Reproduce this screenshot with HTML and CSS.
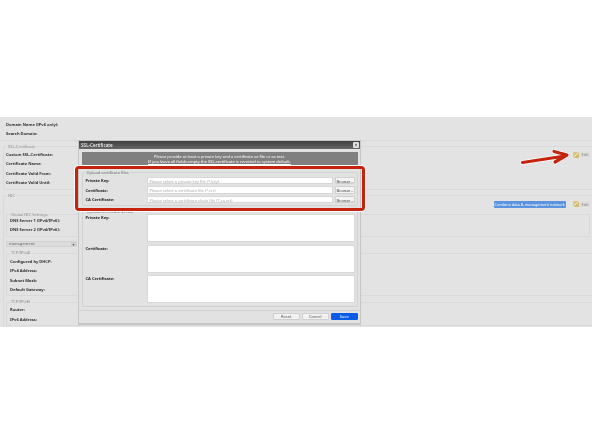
FILE: index.html
```html
<!DOCTYPE html>
<html lang="en">
<head>
<meta charset="utf-8">
<title>SSL-Certificate</title>
<link rel="stylesheet" href="styles.css">
</head>
<body>
<main class="panel">
  <div class="row">Domain Name (IPv6 only):</div>
  <div class="row">Search Domain:</div>
  <hr class="divider">
  <section class="group ssl">
    <span class="legend">SSL-Certificate</span>
    <div class="row">Custom SSL-Certificate:</div>
    <div class="row">Certificate Name:</div>
    <div class="row">Certificate Valid From:</div>
    <div class="row">Certificate Valid Until:</div>
    <div class="edit edit-ssl"><span class="pencil"></span><span>Edit</span></div>
  </section>
  <section class="group nic">
    <span class="legend">NIC</span>
    <div class="nic-actions">
      <span class="combine">Combine data &amp; management network</span>
      <div class="edit"><span class="pencil"></span><span>Edit</span></div>
    </div>
    <section class="group inner global">
      <span class="legend">Global NIC Settings</span>
      <div class="row">DNS Server 1 (IPv4/IPv6):</div>
      <div class="row">DNS Server 2 (IPv4/IPv6):</div>
    </section>
    <div class="select"><span>management</span><span class="caret">&#9662;</span></div>
    <section class="group inner v4">
      <span class="legend">TCP/IP(v4)</span>
      <div class="row">Configured by DHCP:</div>
      <div class="row">IPv4 Address:</div>
      <div class="row">Subnet Mask:</div>
      <div class="row">Default Gateway:</div>
    </section>
    <section class="group inner v6">
      <span class="legend">TCP/IP(v6)</span>
      <div class="row">Router:</div>
      <div class="row">IPv6 Address:</div>
    </section>
  </section>
</main>

<div class="modal">
  <header class="title"><span>SSL-Certificate</span><span class="close">&#215;</span></header>
  <div class="message">
    <p>Please provide at least a private key and a certificate as file or as text.</p>
    <p><u>If you leave all fields empty the SSL-certificate is reverted to system default.</u></p>
  </div>
  <section class="mgroup files">
    <span class="legend">Upload certificate files</span>
    <div class="frow"><b>Private Key:</b><span class="input">Please select a private key file (*.key)</span><span class="browse">Browse...</span></div>
    <div class="frow"><b>Certificate:</b><span class="input">Please select a certificate file (*.crt)</span><span class="browse">Browse...</span></div>
    <div class="frow"><b>CA Certificate:</b><span class="input">Please select a certificate chain file (*-ca.crt)</span><span class="browse">Browse...</span></div>
  </section>
  <section class="mgroup texts">
    <span class="legend">Upload certificate as text</span>
    <div class="trow"><b>Private Key:</b><span class="area"></span></div>
    <div class="trow"><b>Certificate:</b><span class="area"></span></div>
    <div class="trow"><b>CA Certificate:</b><span class="area"></span></div>
  </section>
  <footer class="actions">
    <span class="btn">Reset</span><span class="btn">Cancel</span><span class="btn save">Save</span>
  </footer>
</div>

<div class="highlight"></div>
<svg class="arrow" width="60" height="24" viewBox="0 0 60 24" aria-hidden="true">
  <g fill="none" stroke-linecap="round" stroke-linejoin="round">
    <path d="M3.5 15.5 L46 9 M35 4.5 L48 8 L36 15" stroke="#fff" stroke-width="4.6"/>
    <path d="M3.5 15.5 L46 9 M35 4.5 L48 8 L36 15" stroke="#c4230d" stroke-width="3.2"/>
  </g>
</svg>
</body>
</html>
```

FILE: styles.css
```css
* { box-sizing: border-box; }
html, body { margin: 0; padding: 0; }
body {
  width: 592px;
  height: 444px;
  background: #fff;
  overflow: hidden;
  position: relative;
  font-family: "Noto Sans", "DejaVu Sans", sans-serif;
  font-size: 4.05px;
  color: #333;
  padding-top: 117px;
}
b, .row { font-size: 4.05px; font-weight: bold; }
.panel {
  height: 209.5px;
  background: #e3e3e3;
  padding: 2.5px 0 0 6px;
  overflow: hidden;
  filter: blur(0.3px);
}
.row {
  height: 9.5px;
  line-height: 9.5px;
  white-space: nowrap;
}
.divider {
  height: 1px;
  margin: 1px 0 0 -6px;
  border: 0;
  background: #d9d9d9;
}
.group {
  position: relative;
  border: 1px solid #d9d9d9;
  border-right: 0;
  border-radius: 2px 0 0 2px;
}
.legend {
  position: absolute;
  top: -3.5px;
  left: 2.5px;
  padding: 0 1.5px;
  background: #e3e3e3;
  line-height: 6px;
  color: #8c8c8c;
  font-weight: normal;
  white-space: nowrap;
}
.ssl {
  margin: 5.5px 0 0 -3px;
  height: 44px;
  padding: 2.75px 0 0 2px;
}
.nic {
  margin: 5px 0 0 -3px;
  height: 132px;
  padding: 18px 0 0 2px;
  border-bottom: 0;
}
.inner {
  margin-right: 0;
  padding-left: 3px;
  border-radius: 2px 0 0 2px;
}
.global {
  height: 22.5px;
  margin-right: 2px;
  padding-top: 0.55px;
  border-right: 1px solid #d9d9d9;
}
.select {
  display: flex;
  justify-content: space-between;
  align-items: center;
  width: 71px;
  height: 6px;
  margin-top: 4.2px;
  padding-left: 2px;
  background: #dcdcdc;
  border: 0.5px solid #d2d2d2;
  color: #666;
}
.caret { width: 5px; height: 100%; text-align: center; background: #cfcfcf; line-height: 5px; }
.v4 { height: 43.5px; margin-top: 6px; padding-top: 2.85px; }
.v6 { height: 24px; margin-top: 5.8px; padding-top: 2.25px; }
.edit {
  display: flex;
  align-items: center;
  gap: 2.5px;
  width: 16.5px;
  height: 6.5px;
  background: #dedede;
  color: #888;
  border-radius: 1px;
}
.edit-ssl { position: absolute; top: 4.7px; right: 2.5px; }
.pencil {
  width: 6px;
  height: 6.5px;
  background: linear-gradient(135deg, #d8c684 45%, #f4eecb 50%, #d2bd6e 58%);
  border-radius: 1px;
}
.nic-actions {
  position: absolute;
  top: 4.7px;
  right: 2.5px;
  display: flex;
  gap: 7.5px;
  align-items: center;
}
.combine {
  width: 71.5px;
  height: 7px;
  line-height: 7px;
  font-size: 3.85px;
  text-align: center;
  color: #fff;
  background: #5d93de;
  border-radius: 1px;
  white-space: nowrap;
}
.modal {
  position: absolute;
  left: 78px;
  top: 140px;
  width: 283px;
  height: 184.5px;
  background: #e2e2e2;
  border: 1px solid #c8c6c4;
  border-bottom-width: 2px;
  padding: 0 2.5px;
  filter: blur(0.3px);
}
.title {
  display: flex;
  justify-content: space-between;
  align-items: center;
  height: 8px;
  margin: 0 -2.5px;
  padding: 0 1px 0 2px;
  background: linear-gradient(#3f3f3f, #666);
  color: #fff;
  font-size: 4.7px;
}
.close {
  width: 6px;
  height: 6px;
  line-height: 6px;
  text-align: center;
  background: #ddd;
  color: #333;
  border-radius: 1px;
}
.message {
  height: 14px;
  margin-top: 2.5px;
  padding-top: 2.5px;
  background: #808080;
  color: #fff;
  text-align: center;
  line-height: 5px;
}
.message p { margin: 0; }
.mgroup {
  position: relative;
  border: 1px solid #d2d2d2;
  border-radius: 2px;
  padding: 0 1.5px 0 3px;
}
.files { height: 34px; margin-top: 6.5px; padding-top: 3px; }
.files .legend, .texts .legend { background: #e2e2e2; color: #666; }
.frow {
  display: flex;
  align-items: center;
  height: 9.4px;
}
.frow b, .trow b { width: 61.5px; color: #222; flex: none; }
.input {
  width: 186.5px;
  height: 7.5px;
  line-height: 7px;
  padding-left: 1.5px;
  background: #fff;
  border: 0.5px solid #d8d8d8;
  color: #a8a8a8;
  white-space: nowrap;
}
.browse {
  width: 20px;
  height: 7.5px;
  margin-left: 2px;
  line-height: 7px;
  text-align: center;
  background: #f4f4f4;
  border: 0.5px solid #cfcfcf;
  color: #444;
  border-radius: 1px;
}
.texts { height: 96px; margin-top: 5px; padding-top: 2px; }
.trow { display: flex; height: 30.5px; padding-bottom: 2.5px; }
.trow b { padding-top: 1px; }
.area { flex: 1; background: #fff; border: 0.5px solid #d8d8d8; }
.actions {
  display: flex;
  justify-content: flex-end;
  gap: 2.5px;
  margin: 3px -2.5px 0;
  padding: 2px 2.5px 0;
  border-top: 1px solid #d2d2d2;
}
.btn {
  width: 26.5px;
  height: 7.2px;
  line-height: 6.5px;
  text-align: center;
  background: #f2f2f2;
  border: 0.5px solid #cfcfcf;
  border-radius: 1px;
  color: #555;
}
.save { background: #0a5ce6; border-color: #0a5ce6; color: #fff; }
.highlight {
  position: absolute;
  left: 75px;
  top: 166px;
  width: 290px;
  height: 45px;
  border: 3px solid #c4230d;
  border-radius: 3px;
  outline: 1px solid #fff;
  filter: blur(0.3px);
}
.arrow {
  position: absolute;
  left: 519px;
  top: 147px;
  filter: blur(0.3px);
}
```
